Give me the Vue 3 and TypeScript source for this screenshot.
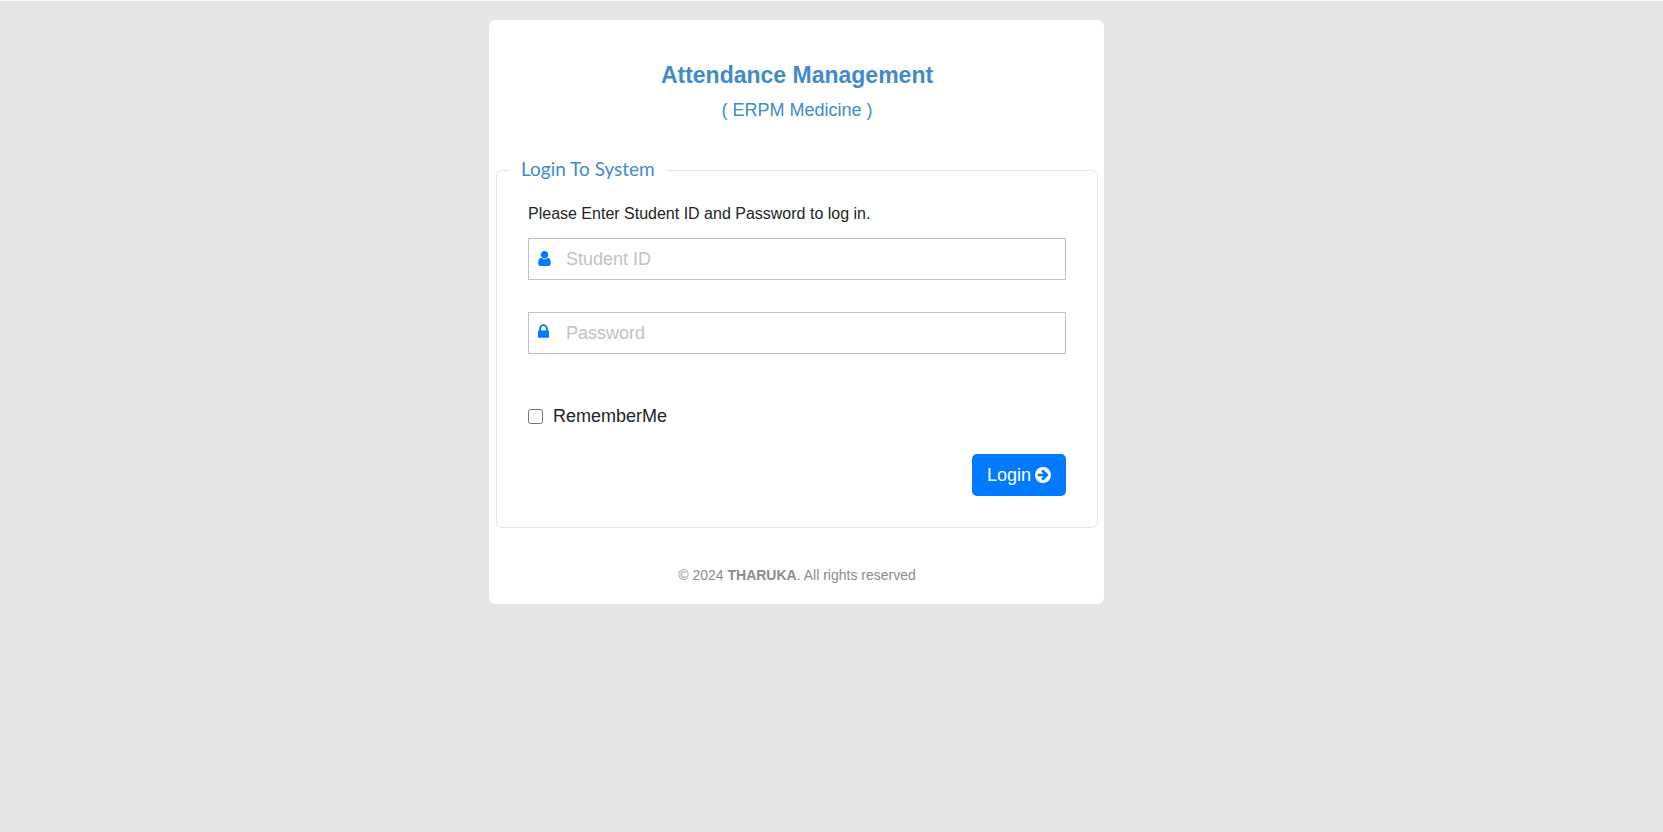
<script setup lang="ts">
import { ref } from 'vue'

const studentId = ref('')
const password = ref('')
const remember = ref(false)
</script>

<template>
  <div class="page">
    <main class="card">
      <header class="heading">
        <h1>Attendance Management</h1>
        <p>( ERPM Medicine )</p>
      </header>

      <form @submit.prevent>
        <fieldset>
          <legend>Login To System</legend>
          <div class="body">
            <p class="hint">Please Enter Student ID and Password to log in.</p>

            <div class="fields">
              <div class="field">
                <svg class="user" viewBox="256 128 1280 1536" aria-hidden="true">
                  <path d="M1536 1399q0 109-62.5 187t-150.5 78h-854q-88 0-150.5-78t-62.5-187q0-85 8.5-160.5t31.5-152 58.5-131 94-89 134.5-34.5q131 128 313 128t313-128q76 0 134.5 34.5t94 89 58.5 131 31.5 152 8.5 160.5zm-256-887q0 159-112.5 271.5t-271.5 112.5-271.5-112.5-112.5-271.5 112.5-271.5 271.5-112.5 271.5 112.5 112.5 271.5z" />
                </svg>
                <input v-model="studentId" type="text" placeholder="Student ID" aria-label="Student ID" />
              </div>
              <div class="field">
                <svg class="lock" viewBox="320 128 1152 1408" aria-hidden="true">
                  <path d="M640 768h512v-192q0-106-75-181t-181-75-181 75-75 181v192zm832 96v576q0 40-28 68t-68 28h-960q-40 0-68-28t-28-68v-576q0-40 28-68t68-28h32v-192q0-184 132-316t316-132 316 132 132 316v192h32q40 0 68 28t28 68z" />
                </svg>
                <input v-model="password" type="password" placeholder="Password" aria-label="Password" />
              </div>
            </div>

            <div class="remember">
              <input id="remember" v-model="remember" type="checkbox" />
              <label for="remember">RememberMe</label>
            </div>

            <div class="actions">
              <button type="submit">
                Login
                <svg viewBox="128 128 1536 1536" aria-hidden="true">
                  <path d="M1413 896q0-27-18-45l-91-91-362-362q-18-18-45-18t-45 18l-91 91q-18 18-18 45t18 45l189 189h-502q-26 0-45 19t-19 45v128q0 26 19 45t45 19h502l-189 189q-19 19-19 45t19 45l91 91q18 18 45 18t45-18l362-362 91-91q18-18 18-45zm251 0q0 209-103 385.5t-279.5 279.5-385.5 103-385.5-103-279.5-279.5-103-385.5 103-385.5 279.5-279.5 385.5-103 385.5 103 279.5 279.5 103 385.5z" />
                </svg>
              </button>
            </div>
          </div>
        </fieldset>
      </form>

      <footer>© 2024 <strong>THARUKA</strong>. All rights reserved</footer>
    </main>
  </div>
</template>

<style>
body {
  background: #e4e5e7;
}
</style>

<style scoped>
.page {
  box-sizing: border-box;
  min-height: 100vh;
  padding: 19px 70px 19px 0;
  border-top: 1px solid #fff;
  background: #e4e5e7;
  color: #212529;
  font-family: "Liberation Sans", Arial, sans-serif;
}

.card {
  box-sizing: border-box;
  max-width: 615px;
  margin: 0 auto;
  padding: 41px 6px 19px 7px;
  border-radius: 6px;
  background: #fff;
}

.heading {
  margin-bottom: 32px;
  color: #428bca;
  text-align: center;
}

h1 {
  margin: 0 0 8px;
  font-size: 23px;
  line-height: 28px;
}

.heading p {
  margin: 0;
  font-size: 18px;
  line-height: 26px;
}

fieldset {
  min-width: 0;
  margin: 0;
  padding: 0 12px;
  border: 1px solid #e4e5e7;
  border-radius: 6px;
}

legend {
  padding: 0 12px 2px;
  color: #428bca;
  font-family: Lato, sans-serif;
  font-size: 19px;
  line-height: 28px;
}

.body {
  padding: 17px 19px 31px;
}

.hint {
  margin: 0 0 12px;
  font-size: 16px;
  line-height: 24px;
}

.fields {
  display: grid;
  gap: 32px;
}

.field {
  display: flex;
  align-items: center;
  box-sizing: border-box;
  height: 42px;
  padding-left: 9px;
  border: 1px solid #c2c2c6;
  background: #fff;
}

.field svg {
  flex: none;
  fill: #007bff;
}

.user {
  width: 13px;
  height: 15px;
  margin: 0 15px 2px 0;
}

.lock {
  width: 11px;
  height: 14px;
  margin: 0 17px 4px 0;
}

.field input {
  flex: 1;
  min-width: 0;
  height: 38px;
  padding: 0;
  border: 0;
  outline: 0;
  background: transparent;
  color: #495057;
  font-family: inherit;
  font-size: 18px;
}

.field input::placeholder {
  color: #c2c2c6;
}

.remember {
  display: flex;
  align-items: center;
  gap: 10px;
  margin-top: 49px;
  font-size: 18px;
  line-height: 26px;
}

.remember input {
  width: 15px;
  height: 15px;
  margin: 0;
}

.actions {
  display: flex;
  justify-content: flex-end;
  margin-top: 25px;
}

button {
  display: flex;
  align-items: center;
  gap: 4px;
  height: 42px;
  padding: 0 15px;
  border: 0;
  border-radius: 5px;
  background: #007bff;
  color: #fff;
  font-family: inherit;
  font-size: 18px;
}

button svg {
  width: 16px;
  height: 16px;
  fill: currentColor;
}

footer {
  margin-top: 37px;
  color: #8c8c90;
  font-size: 14px;
  line-height: 20px;
  text-align: center;
}
</style>
